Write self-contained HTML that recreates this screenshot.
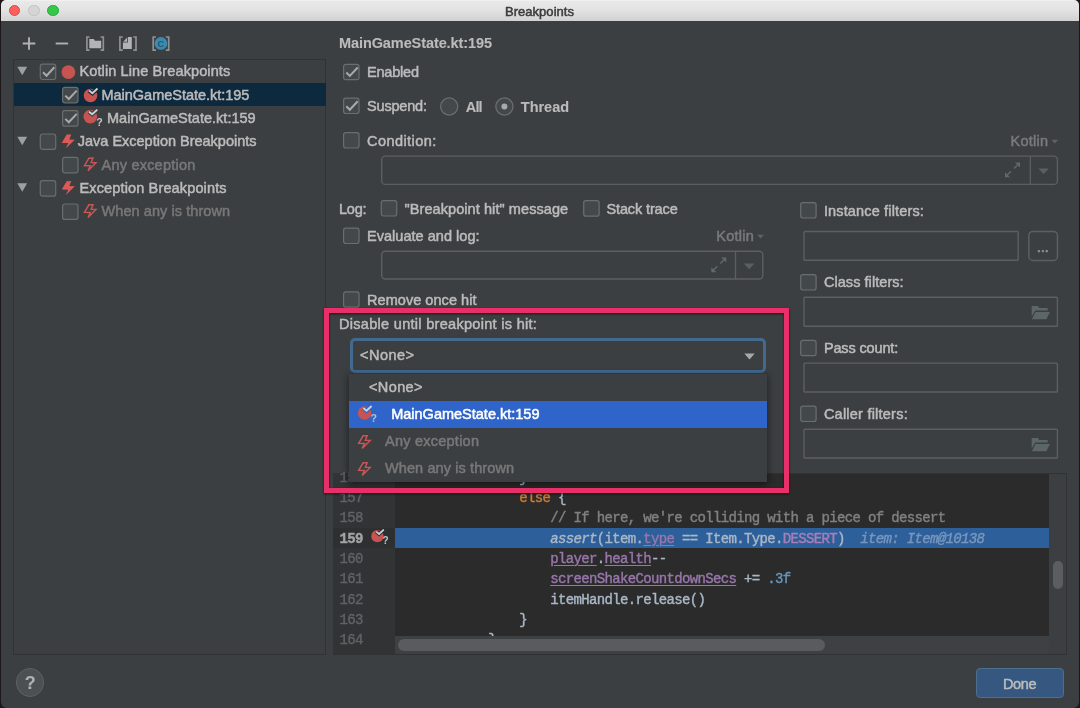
<!DOCTYPE html>
<html lang="en">
<head>
<meta charset="utf-8">
<title>Breakpoints</title>
<style>
html,body{margin:0;padding:0;}
body{width:1080px;height:708px;overflow:hidden;background:#1d1719;position:relative;
 font-family:"Liberation Sans",sans-serif;font-size:14.5px;color:#bbbbbb;}
#win{position:absolute;left:1px;top:0;width:1077.7px;height:708px;background:#3c3f41;
 border-radius:5px 5px 6px 6px;overflow:hidden;}
#stage{position:absolute;left:-1px;top:0;width:1080px;height:708px;will-change:transform;}
#titlebar{position:absolute;left:0;top:0;width:1080px;height:21px;
 background:linear-gradient(#f4f4f4,#e9e9e9 6%,#e3e3e3 45%,#d2d2d2);box-sizing:content-box;}
.tl{position:absolute;top:4.9px;width:11.6px;height:11.6px;border-radius:50%;box-sizing:border-box;}
.abs{position:absolute;box-sizing:border-box;}
.t{position:absolute;white-space:pre;line-height:normal;-webkit-text-stroke:0.5px;}
.row{position:absolute;left:13.5px;width:312px;height:23.3px;}
svg{display:block;overflow:visible;}
.ic{position:absolute;}
.code,.ln{position:absolute;white-space:pre;font-family:"Liberation Mono",monospace;font-size:14px;letter-spacing:-0.65px;line-height:normal;color:#a9b7c6;-webkit-text-stroke:0.4px;}
.ln{color:#606366;}
.u{text-decoration:underline;text-underline-offset:2px;text-decoration-thickness:1px;}
</style>
</head>
<body>
<div id="win"><div id="stage">

<!-- title bar -->
<div id="titlebar">
 <div class="tl" style="left:8.7px;background:#fc605c;border:0.5px solid #df4744;"></div>
 <div class="tl" style="left:28.2px;background:#d5d5d5;border:0.5px solid #c2c2c2;"></div>
 <div class="tl" style="left:47.4px;background:#34c84a;border:0.5px solid #27aa35;"></div>
</div>

<!-- toolbar -->
<svg class="ic" style="left:0;top:0" width="180" height="58" viewBox="0 0 180 58">
 <g stroke="#afb1b3" stroke-width="1.9" fill="none">
  <path d="M22.7 43.5H35.3M29 37.2V49.8"/>
  <path d="M55.7 43.5H68.1"/>
 </g>
 <g stroke="#8e9193" stroke-width="1.7" fill="none">
  <path d="M89.6 37.0H86.9V50.1H89.6"/><path d="M100.6 37.0H103.3V50.1H100.6"/>
  <path d="M122.8 37.0H119.9V50.1H122.8"/><path d="M133.3 37.0H136.0V50.1H133.3"/>
  <path d="M156 37.0H153.2V50.1H156"/><path d="M165.8 37.0H168.7V50.1H165.8"/>
 </g>
 <path d="M89.3 39.1H93.8L94.9 40.7H101.2V48.3H89.3Z" fill="#b1b3b5"/>
 <path d="M127.9 37.1H131.8V49.1H122.9V42.6H127.9Z" fill="#b1b3b5"/>
 <path d="M127.1 37.6V41.8H123.3Z" fill="#b1b3b5"/>
 <circle cx="160.9" cy="43.4" r="6.35" fill="#3b8bae"/>
 <text x="157.6" y="46.7" font-family="Liberation Sans, sans-serif" font-size="9.2" font-weight="700" fill="#28566f">C</text>
</svg>


<!-- tree panel -->
<div class="abs" style="left:13px;top:58.5px;width:313px;height:596px;border:1px solid #323232;"></div>
<div class="row" style="top:83px;height:23px;background:#0d293e;"></div>
<svg class="ic" style="left:39px;top:63px" width="19" height="19" viewBox="0 0 19 19"><rect x="1.30" y="1.10" width="15.4" height="15.4" rx="2.2" fill="#43494a" stroke="#6b6e6f" stroke-width="1.2"/><path d="M4.00 9.30L7.50 12.70L15.40 4.30" stroke="#a9a9a9" stroke-width="2" fill="none"/></svg>
<svg class="ic" style="left:62px;top:86px" width="19" height="19" viewBox="0 0 19 19"><rect x="0.60" y="1.40" width="15.4" height="15.4" rx="2.2" fill="#43494a" stroke="#6b6e6f" stroke-width="1.2"/><path d="M3.30 9.60L6.80 13.00L14.70 4.60" stroke="#a9a9a9" stroke-width="2" fill="none"/></svg>
<svg class="ic" style="left:62px;top:110px" width="19" height="19" viewBox="0 0 19 19"><rect x="0.60" y="0.70" width="15.4" height="15.4" rx="2.2" fill="#43494a" stroke="#6b6e6f" stroke-width="1.2"/><path d="M3.30 8.90L6.80 12.30L14.70 3.90" stroke="#a9a9a9" stroke-width="2" fill="none"/></svg>
<svg class="ic" style="left:39px;top:133px" width="19" height="19" viewBox="0 0 19 19"><rect x="1.30" y="1.00" width="15.4" height="15.4" rx="2.2" fill="#43494a" stroke="#6b6e6f" stroke-width="1.2"/></svg>
<svg class="ic" style="left:62px;top:156px" width="19" height="19" viewBox="0 0 19 19"><rect x="0.60" y="1.40" width="15.4" height="15.4" rx="2.2" fill="#43494a" stroke="#6b6e6f" stroke-width="1.2"/></svg>
<svg class="ic" style="left:39px;top:180px" width="19" height="19" viewBox="0 0 19 19"><rect x="1.30" y="0.70" width="15.4" height="15.4" rx="2.2" fill="#43494a" stroke="#6b6e6f" stroke-width="1.2"/></svg>
<svg class="ic" style="left:62px;top:203px" width="19" height="19" viewBox="0 0 19 19"><rect x="0.60" y="1.00" width="15.4" height="15.4" rx="2.2" fill="#43494a" stroke="#6b6e6f" stroke-width="1.2"/></svg>
<svg class="ic" style="left:0;top:0" width="330" height="230" viewBox="0 0 330 230"><path d="M17.35 66.65H27.15L22.25 75.15Z" fill="#9da0a2"/><path d="M17.35 136.64H27.15L22.25 145.14Z" fill="#9da0a2"/><path d="M17.35 183.30H27.15L22.25 191.80Z" fill="#9da0a2"/><circle cx="68.4" cy="72.1" r="6.9" fill="#c75450"/><circle cx="90.5" cy="95.5" r="6.8" fill="#c75450"/><path d="M89.20 90.60L92.40 93.20L97.50 88.50" stroke="#0d293e" stroke-width="4.2" fill="none"/><path d="M89.20 90.60L92.40 93.20L97.50 88.50" stroke="#cdd2d7" stroke-width="1.9" fill="none"/><circle cx="90.3" cy="116.6" r="6.8" fill="#c75450"/><path d="M89.00 111.70L92.20 114.30L97.30 109.60" stroke="#3c3f41" stroke-width="4.2" fill="none"/><path d="M89.00 111.70L92.20 114.30L97.30 109.60" stroke="#cdd2d7" stroke-width="1.9" fill="none"/><text x="96.3" y="125.9" font-family="Liberation Sans, sans-serif" font-size="10.6" font-weight="700" fill="#c2c4c6">?</text><path d="M66.70 134.54L71.30 134.44L69.30 139.44L74.80 139.64L65.70 148.54L68.30 143.04L61.70 142.94Z" fill="#db5a58"/><path d="M66.70 181.20L71.30 181.10L69.30 186.10L74.80 186.30L65.70 195.20L68.30 189.70L61.70 189.60Z" fill="#db5a58"/><path d="M88.89 158.17L92.94 158.08L91.18 162.58L96.02 162.76L88.01 170.77L90.30 165.82L84.49 165.73Z" fill="none" stroke="#db5a58" stroke-width="1.45" stroke-linejoin="miter" stroke-opacity="0.88"/><path d="M88.89 204.83L92.94 204.74L91.18 209.24L96.02 209.42L88.01 217.43L90.30 212.48L84.49 212.39Z" fill="none" stroke="#db5a58" stroke-width="1.45" stroke-linejoin="miter" stroke-opacity="0.88"/></svg>

<svg class="ic" style="left:343px;top:63px" width="19" height="19" viewBox="0 0 19 19"><rect x="0.60" y="1.30" width="15.4" height="15.4" rx="2.2" fill="#43494a" stroke="#6b6e6f" stroke-width="1.2"/><path d="M3.30 9.50L6.80 12.90L14.70 4.50" stroke="#a9a9a9" stroke-width="2" fill="none"/></svg>
<svg class="ic" style="left:343px;top:97px" width="19" height="19" viewBox="0 0 19 19"><rect x="0.60" y="1.10" width="15.4" height="15.4" rx="2.2" fill="#43494a" stroke="#6b6e6f" stroke-width="1.2"/><path d="M3.30 9.30L6.80 12.70L14.70 4.30" stroke="#a9a9a9" stroke-width="2" fill="none"/></svg>
<svg class="ic" style="left:343px;top:132px" width="19" height="19" viewBox="0 0 19 19"><rect x="0.60" y="0.60" width="15.4" height="15.4" rx="2.2" fill="#43494a" stroke="#6b6e6f" stroke-width="1.2"/></svg>
<svg class="ic" style="left:380px;top:200px" width="19" height="19" viewBox="0 0 19 19"><rect x="1.30" y="0.60" width="15.4" height="15.4" rx="2.2" fill="#43494a" stroke="#6b6e6f" stroke-width="1.2"/></svg>
<svg class="ic" style="left:583px;top:200px" width="19" height="19" viewBox="0 0 19 19"><rect x="0.70" y="0.70" width="15.4" height="15.4" rx="2.2" fill="#43494a" stroke="#6b6e6f" stroke-width="1.2"/></svg>
<svg class="ic" style="left:343px;top:227px" width="19" height="19" viewBox="0 0 19 19"><rect x="0.60" y="1.10" width="15.4" height="15.4" rx="2.2" fill="#43494a" stroke="#6b6e6f" stroke-width="1.2"/></svg>
<svg class="ic" style="left:343px;top:291px" width="19" height="19" viewBox="0 0 19 19"><rect x="0.60" y="0.80" width="15.4" height="15.4" rx="2.2" fill="#43494a" stroke="#6b6e6f" stroke-width="1.2"/></svg>
<svg class="ic" style="left:800px;top:202px" width="19" height="19" viewBox="0 0 19 19"><rect x="0.70" y="0.60" width="15.4" height="15.4" rx="2.2" fill="#43494a" stroke="#6b6e6f" stroke-width="1.2"/></svg>
<svg class="ic" style="left:800px;top:274px" width="19" height="19" viewBox="0 0 19 19"><rect x="0.70" y="0.60" width="15.4" height="15.4" rx="2.2" fill="#43494a" stroke="#6b6e6f" stroke-width="1.2"/></svg>
<svg class="ic" style="left:800px;top:339px" width="19" height="19" viewBox="0 0 19 19"><rect x="0.70" y="1.30" width="15.4" height="15.4" rx="2.2" fill="#43494a" stroke="#6b6e6f" stroke-width="1.2"/></svg>
<svg class="ic" style="left:800px;top:405px" width="19" height="19" viewBox="0 0 19 19"><rect x="0.70" y="1.10" width="15.4" height="15.4" rx="2.2" fill="#43494a" stroke="#6b6e6f" stroke-width="1.2"/></svg>
<svg class="ic" style="left:0;top:0" width="1080" height="480" viewBox="0 0 1080 480"><rect x="381.70" y="156.10" width="675.70" height="28.30" rx="3.5" fill="none" stroke="#5c5f61" stroke-width="1.4"/><rect x="381.70" y="251.30" width="381.10" height="27.70" rx="3.5" fill="none" stroke="#5c5f61" stroke-width="1.4"/><rect x="804.00" y="231.50" width="214.20" height="28.80" rx="0.8" fill="none" stroke="#5c5f61" stroke-width="1.4"/><rect x="1028.85" y="231.45" width="28.60" height="29.00" rx="4" fill="none" stroke="#5c5f61" stroke-width="1.5"/><rect x="804.00" y="297.30" width="253.40" height="28.90" rx="0.8" fill="none" stroke="#5c5f61" stroke-width="1.4"/><rect x="804.00" y="363.10" width="253.40" height="28.90" rx="0.8" fill="none" stroke="#5c5f61" stroke-width="1.4"/><rect x="804.00" y="429.30" width="253.40" height="28.70" rx="0.8" fill="none" stroke="#5c5f61" stroke-width="1.4"/></svg>
<div class="abs" style="left:350px;top:338.2px;width:416px;height:34.4px;border:3.6px solid #43698f;border-radius:5px;background:#3c3f41;"></div>
<svg class="ic" style="left:0;top:0" width="1080" height="480" viewBox="0 0 1080 480"><circle cx="449.2" cy="106.5" r="8.6" fill="#43494a" stroke="#6b6e6f" stroke-width="1.3"/><circle cx="504.4" cy="106.5" r="8.6" fill="#43494a" stroke="#6b6e6f" stroke-width="1.3"/><circle cx="504.4" cy="106.5" r="3" fill="#a9a9a9"/><path d="M1030.3 156V184.6M735.5 251.2V279.2" stroke="#5c5f61" stroke-width="1.3"/><path d="M1038.4 168.5H1048.8L1043.6 174.1Z" fill="#5c5f61"/><path d="M743.8 263.4H754.4L749.1 269.2Z" fill="#5c5f61"/><path d="M1020.0 162.5H1015.0L1020.0 167.5Z M1005.0 177.3V172.3L1010.0 177.3Z" fill="#5d6a71"/><path d="M1017.8 164.7L1014.0 168.5M1007.2 175.1L1011.0 171.3" stroke="#5d6a71" stroke-width="1.4" fill="none"/><path d="M726.3 257.4H721.3L726.3 262.4Z M711.3 272.2V267.2L716.3 272.2Z" fill="#5d6a71"/><path d="M724.1 259.6L720.3 263.4M713.5 270.0L717.3 266.2" stroke="#5d6a71" stroke-width="1.4" fill="none"/><path d="M1051.4 139.8H1058.2L1054.8 143.5Z" fill="#5f6264"/><path d="M757.2 234.8H764L760.6 238.5Z" fill="#5f6264"/><path d="M744.3 353.4H754.7L749.5 359.4Z" fill="#a6a8aa"/><g fill="#8e9192"><rect x="1037.7" y="250" width="1.7" height="1.7"/><rect x="1041.9" y="250" width="1.7" height="1.7"/><rect x="1046.1" y="250" width="1.7" height="1.7"/></g><path d="M1031.7 306.0H1037.9L1039.3 308.0H1047.7V310.6H1035.3L1031.7 316.4Z" fill="#5c6669"/><path d="M1035.5 311.9H1050.0L1046.4 319.2H1031.9Z" fill="#5c6669"/><path d="M1031.7 438.0H1037.9L1039.3 440.0H1047.7V442.6H1035.3L1031.7 448.4Z" fill="#5c6669"/><path d="M1035.5 443.9H1050.0L1046.4 451.2H1031.9Z" fill="#5c6669"/></svg>

<div class="abs" style="left:333.3px;top:473px;width:733.7px;height:181.5px;border:1px solid #323232;background:#3c3f41;"></div>
<div class="abs" style="left:333.3px;top:473px;width:61.9px;height:181px;background:#313335;"></div>
<div class="abs" style="left:395.2px;top:474px;width:654px;height:162.3px;background:#2b2b2b;"></div>
<div class="abs" style="left:395.2px;top:636.3px;width:654px;height:17.2px;background:#3e4143;"></div>
<div class="abs" style="left:333.3px;top:527.8px;width:61.9px;height:20.2px;background:#2d2f30;"></div>
<div class="abs" style="left:395.2px;top:527.8px;width:654px;height:20.2px;background:#2d5f9a;"></div>
<div class="abs" style="left:1052.7px;top:560.8px;width:10.8px;height:28.7px;border-radius:5.4px;background:#5b5e60;"></div>
<div class="abs" style="left:397.9px;top:639px;width:427px;height:12.2px;border-radius:6.1px;background:#595c5e;"></div>
<span class="ln" style="left:339.6px;top:469.7px;">156</span>
<span class="ln" style="left:339.6px;top:490.0px;">157</span>
<span class="ln" style="left:339.6px;top:510.3px;">158</span>
<span class="ln" style="left:339.6px;top:530.6px;color:#a4a3a3;font-weight:700;">159</span>
<span class="ln" style="left:339.6px;top:550.9px;">160</span>
<span class="ln" style="left:339.6px;top:571.2px;">161</span>
<span class="ln" style="left:339.6px;top:591.5px;">162</span>
<span class="ln" style="left:339.6px;top:611.8px;">163</span>
<span class="ln" style="left:339.6px;top:632.1px;">164</span>
<span class="code" style="left:519.2px;top:469.7px;">}</span>
<span class="code" style="left:519.2px;top:490.0px;"><span style="color:#cc7832">else</span> {</span>
<span class="code" style="left:550.2px;top:510.3px;"><span style="color:#808080">// If here, we're colliding with a piece of dessert</span></span>
<span class="code" style="left:550.2px;top:530.6px;"><span style="font-style:italic">assert</span>(item.<span class="u" style="color:#9876aa">type</span> == Item.Type.<span style="color:#a87fb8">DESSERT</span>)  <span style="font-style:italic;color:#7896be">item: Item@10138</span></span>
<span class="code" style="left:550.2px;top:550.9px;"><span class="u" style="color:#9876aa">player</span>.<span class="u" style="color:#9876aa">health</span>--</span>
<span class="code" style="left:550.2px;top:571.2px;"><span class="u" style="color:#9876aa">screenShakeCountdownSecs</span> += <span style="color:#6897bb">.3f</span></span>
<span class="code" style="left:550.2px;top:591.5px;">itemHandle.release()</span>
<span class="code" style="left:519.2px;top:611.8px;">}</span>
<div class="abs" style="left:395.2px;top:620px;width:300px;height:16.3px;overflow:hidden;"><span class="code" style="left:93.0px;top:12.1px;">}</span></div>
<svg class="ic" style="left:0;top:0" width="400" height="560" viewBox="0 0 400 560"><circle cx="377.4" cy="536.2" r="6.15" fill="#c75450"/><path d="M376.20 531.60L379.10 534.00L383.80 529.70" stroke="#2d2f30" stroke-width="3.8" fill="none"/><path d="M376.20 531.60L379.10 534.00L383.80 529.70" stroke="#cdd2d7" stroke-width="1.7" fill="none"/><text x="382.6" y="544.0" font-family="Liberation Sans, sans-serif" font-size="10" font-weight="700" fill="#c2c4c6">?</text></svg>

<div class="abs" style="left:348.9px;top:373.5px;width:418.3px;height:108.5px;background:#3c3f41;box-shadow:0 2px 7px 1px rgba(0,0,0,.45);"></div>
<div class="abs" style="left:348.9px;top:401px;width:418.3px;height:27.2px;background:#2f65ca;"></div>
<svg class="ic" style="left:0;top:0" width="800" height="500" viewBox="0 0 800 500"><circle cx="364.6" cy="413.0" r="6.8" fill="#c75450"/><path d="M363.30 408.10L366.50 410.70L371.60 406.00" stroke="#2f65ca" stroke-width="4.2" fill="none"/><path d="M363.30 408.10L366.50 410.70L371.60 406.00" stroke="#cdd2d7" stroke-width="1.9" fill="none"/><text x="370.6" y="422.3" font-family="Liberation Sans, sans-serif" font-size="10.6" font-weight="700" fill="#bcbec0">?</text><path d="M363.09 435.80L367.14 435.71L365.38 440.21L370.22 440.39L362.21 448.40L364.50 443.45L358.69 443.36Z" fill="none" stroke="#db5a58" stroke-width="1.45" stroke-linejoin="miter" stroke-opacity="0.88"/><path d="M363.09 462.80L367.14 462.71L365.38 467.21L370.22 467.39L362.21 475.40L364.50 470.45L358.69 470.36Z" fill="none" stroke="#db5a58" stroke-width="1.45" stroke-linejoin="miter" stroke-opacity="0.88"/></svg>
<div class="abs" style="left:324.4px;top:307.8px;width:464.2px;height:185.2px;border:5px solid #e92f69;filter:drop-shadow(0.8px 1.2px 0.8px rgba(0,0,0,.75));"></div>

<div class="abs" style="left:15.7px;top:668.4px;width:28.6px;height:28.6px;border-radius:50%;background:#4c5052;border:1px solid #5e6162;"></div>
<div class="abs" style="left:976px;top:668.1px;width:88px;height:29.6px;border-radius:4px;background:#365880;border:1px solid #4c708c;"></div>

<span class="t" style="left:505.0px;top:3.7px;letter-spacing:0.03px;font-size:13px;color:#3b3b3b;">Breakpoints</span>
<span class="t" style="left:79.5px;top:63.2px;letter-spacing:0.11px;">Kotlin Line Breakpoints</span>
<span class="t" style="left:101.5px;top:86.6px;letter-spacing:-0.02px;">MainGameState.kt:195</span>
<span class="t" style="left:107.0px;top:109.9px;letter-spacing:0.02px;">MainGameState.kt:159</span>
<span class="t" style="left:77.8px;top:133.2px;letter-spacing:-0.01px;">Java Exception Breakpoints</span>
<span class="t" style="left:101.5px;top:156.6px;letter-spacing:0.22px;color:#787878;">Any exception</span>
<span class="t" style="left:79.5px;top:179.9px;letter-spacing:0.14px;">Exception Breakpoints</span>
<span class="t" style="left:101.5px;top:203.2px;letter-spacing:0.07px;color:#787878;">When any is thrown</span>
<span class="t" style="left:339.0px;top:35.4px;letter-spacing:-0.09px;font-weight:700;-webkit-text-stroke:0.1px;">MainGameState.kt:195</span>
<span class="t" style="left:367.0px;top:64.2px;letter-spacing:-0.20px;">Enabled</span>
<span class="t" style="left:367.0px;top:98.2px;letter-spacing:-0.18px;">Suspend:</span>
<span class="t" style="left:465.8px;top:98.7px;letter-spacing:-0.89px;font-weight:700;-webkit-text-stroke:0.1px;">All</span>
<span class="t" style="left:520.8px;top:98.7px;letter-spacing:-0.02px;font-weight:700;-webkit-text-stroke:0.1px;">Thread</span>
<span class="t" style="left:367.0px;top:132.9px;letter-spacing:0.44px;">Condition:</span>
<span class="t" style="left:339.0px;top:201.2px;letter-spacing:-0.24px;">Log:</span>
<span class="t" style="left:404.5px;top:201.2px;letter-spacing:0.08px;">&quot;Breakpoint hit&quot; message</span>
<span class="t" style="left:606.5px;top:201.2px;letter-spacing:-0.13px;">Stack trace</span>
<span class="t" style="left:367.0px;top:228.2px;letter-spacing:0.03px;">Evaluate and log:</span>
<span class="t" style="left:367.0px;top:291.6px;letter-spacing:0.05px;">Remove once hit</span>
<span class="t" style="left:339.0px;top:315.9px;letter-spacing:0.30px;">Disable until breakpoint is hit:</span>
<span class="t" style="left:360.0px;top:346.9px;letter-spacing:0.48px;">&lt;None&gt;</span>
<span class="t" style="left:369.0px;top:379.2px;letter-spacing:0.38px;">&lt;None&gt;</span>
<span class="t" style="left:391.2px;top:406.2px;letter-spacing:-0.00px;color:#ffffff;">MainGameState.kt:159</span>
<span class="t" style="left:385.0px;top:433.2px;letter-spacing:0.24px;color:#787878;">Any exception</span>
<span class="t" style="left:385.0px;top:460.2px;letter-spacing:0.10px;color:#787878;">When any is thrown</span>
<span class="t" style="left:1010.5px;top:133.1px;letter-spacing:0.26px;color:#787a7c;">Kotlin</span>
<span class="t" style="left:716.3px;top:228.1px;letter-spacing:0.26px;color:#787a7c;">Kotlin</span>
<span class="t" style="left:823.9px;top:203.2px;letter-spacing:0.15px;">Instance filters:</span>
<span class="t" style="left:823.9px;top:274.4px;letter-spacing:0.06px;">Class filters:</span>
<span class="t" style="left:823.9px;top:340.2px;letter-spacing:-0.14px;">Pass count:</span>
<span class="t" style="left:823.9px;top:406.2px;letter-spacing:0.23px;">Caller filters:</span>
<span class="t" style="left:1002.9px;top:675.7px;letter-spacing:-0.36px;">Done</span>
<span class="t" style="left:24.7px;top:673.3px;letter-spacing:0.00px;font-weight:700;-webkit-text-stroke:0.1px;font-size:18px;color:#afb1b3;">?</span>
<span class="t" style="left:1037.1px;top:238.1px;letter-spacing:-0.46px;font-size:15px;color:#8a8c8d;">...</span>

</div></div>
</body>
</html>
